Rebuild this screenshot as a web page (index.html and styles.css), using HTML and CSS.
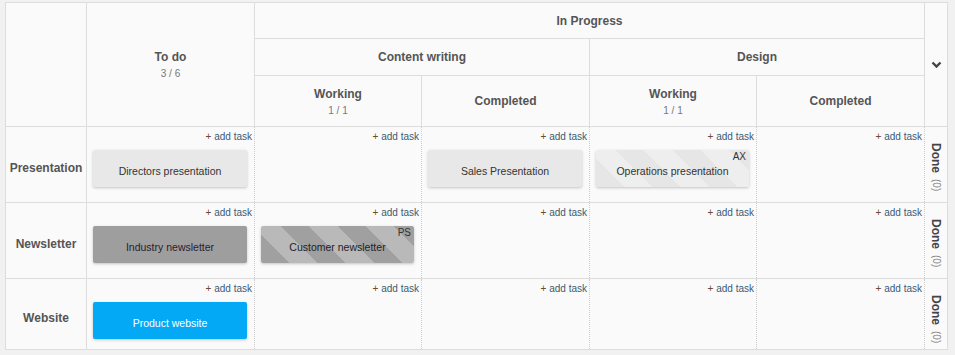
FILE: index.html
```html
<!DOCTYPE html>
<html lang="en">
<head>
    <meta charset="UTF-8">
    <meta name="viewport" content="width=device-width, initial-scale=1.0">
    <title>Board</title>
    <link rel="stylesheet" href="styles.css">
</head>
<body>
    <table class="board">
        <colgroup>
            <col class="c-lane">
            <col class="c-col">
            <col class="c-col2">
            <col class="c-col">
            <col class="c-col2">
            <col class="c-col">
            <col class="c-done">
        </colgroup>
        <thead>
            <tr class="h1">
                <th rowspan="3" class="corner"></th>
                <th rowspan="3">To do<span class="count">3 / 6</span></th>
                <th colspan="4">In Progress</th>
                <th rowspan="3" class="toggle">
                    <svg width="11" height="8" viewBox="0 0 11 8"><polyline points="1.5,1.5 5.5,5.5 9.5,1.5" fill="none" stroke="#444" stroke-width="2.4"/></svg>
                </th>
            </tr>
            <tr class="h2">
                <th colspan="2">Content writing</th>
                <th colspan="2">Design</th>
            </tr>
            <tr class="h3">
                <th>Working<span class="count">1 / 1</span></th>
                <th>Completed</th>
                <th>Working<span class="count">1 / 1</span></th>
                <th>Completed</th>
            </tr>
        </thead>
        <tbody>
            <tr class="r1">
                <th class="lane">Presentation</th>
                <td><div class="add"><span class="plus">+</span> add task</div><div class="card">Directors presentation</div></td>
                <td><div class="add"><span class="plus">+</span> add task</div></td>
                <td><div class="add"><span class="plus">+</span> add task</div><div class="card">Sales Presentation</div></td>
                <td><div class="add"><span class="plus">+</span> add task</div><div class="card light-stripes"><span class="who">AX</span>Operations presentation</div></td>
                <td><div class="add"><span class="plus">+</span> add task</div></td>
                <td class="done"><div class="done-label"><b>Done</b><span>(0)</span></div></td>
            </tr>
            <tr class="r2">
                <th class="lane">Newsletter</th>
                <td><div class="add"><span class="plus">+</span> add task</div><div class="card grey">Industry newsletter</div></td>
                <td><div class="add"><span class="plus">+</span> add task</div><div class="card grey-stripes"><span class="who">PS</span>Customer newsletter</div></td>
                <td><div class="add"><span class="plus">+</span> add task</div></td>
                <td><div class="add"><span class="plus">+</span> add task</div></td>
                <td><div class="add"><span class="plus">+</span> add task</div></td>
                <td class="done"><div class="done-label"><b>Done</b><span>(0)</span></div></td>
            </tr>
            <tr class="r3">
                <th class="lane">Website</th>
                <td><div class="add"><span class="plus">+</span> add task</div><div class="card blue">Product website</div></td>
                <td><div class="add"><span class="plus">+</span> add task</div></td>
                <td><div class="add"><span class="plus">+</span> add task</div></td>
                <td><div class="add"><span class="plus">+</span> add task</div></td>
                <td><div class="add"><span class="plus">+</span> add task</div></td>
                <td class="done"><div class="done-label"><b>Done</b><span>(0)</span></div></td>
            </tr>
        </tbody>
    </table>
</body>
</html>
```

FILE: styles.css
```css
*{
    padding: 0;
    margin: 0;
    box-sizing: border-box;
}
body{
    background-color: #f1f1f1;
    font-family: "Liberation Sans", Arial, sans-serif;
    color: #555;
    padding: 2px 0 0 5px;
}
.board{
    width: 942px;
    table-layout: fixed;
    border-collapse: collapse;
    background-color: #fafafa;
    border: 1px solid #ddd;
}
.c-lane{ width: 81px; }
.c-col{ width: 168px; }
.c-col2{ width: 167px; }
.c-done{ width: 23px; }

thead th{
    border: 1px solid #ddd;
    font-size: 12px;
    font-weight: bold;
    color: #555;
    text-align: center;
    vertical-align: middle;
}
.h1{ height: 36px; }
.h2{ height: 37px; }
.h3{ height: 51px; }
.count{
    display: block;
    font-size: 10px;
    font-weight: normal;
    color: #777;
    margin-top: 4px;
}
.toggle svg{
    display: block;
    margin: 0 auto;
}

tbody tr{ height: 76px; }
tbody tr.r3{ height: 71px; }
tbody td{
    border-top: 1px solid #ddd;
    border-bottom: 1px solid #ddd;
    border-left: 1px dotted #ccc;
    border-right: 1px dotted #ccc;
    vertical-align: top;
    padding: 3px 0 0 0;
}
.lane{
    border: 1px solid #ddd;
    font-size: 12px;
    font-weight: bold;
    color: #555;
    text-align: center;
    vertical-align: middle;
    padding-top: 7px;
}
.add{
    font-size: 10px;
    line-height: 13px;
    text-align: right;
    padding-right: 2px;
    color: #3b5a72;
}
.plus{
    color: #6e4a2e;
}
.card{
    position: relative;
    margin: 7px 7px 0 6px;
    height: 37px;
    border-radius: 2px;
    background-color: #e8e8e8;
    box-shadow: 0 1px 3px rgba(0, 0, 0, 0.22);
    font-size: 10.5px;
    color: #333;
    display: flex;
    align-items: center;
    justify-content: center;
    padding-top: 4px;
}
.who{
    position: absolute;
    top: 1px;
    right: 3px;
    font-size: 10px;
    color: #333;
}
.light-stripes{
    background: repeating-linear-gradient(45deg, #e6e6e6 0 20px, #eeeeee 20px 40px);
}
.grey{
    background-color: #9e9e9e;
    color: #2a2030;
}
.grey-stripes{
    background: repeating-linear-gradient(45deg, #a0a0a0 0 20px, #b9b9b9 20px 40px);
    color: #222;
}
.blue{
    background-color: #03a9f4;
    color: #fff;
}
.done{
    border-right: 1px solid #ddd;
    padding-top: 16px;
}
.done-label{
    writing-mode: vertical-rl;
    margin: 0 auto;
    color: #444;
    font-size: 12px;
    display: flex;
    align-items: center;
    gap: 6px;
}
.done-label span{
    font-size: 10px;
    color: #888;
}
```
